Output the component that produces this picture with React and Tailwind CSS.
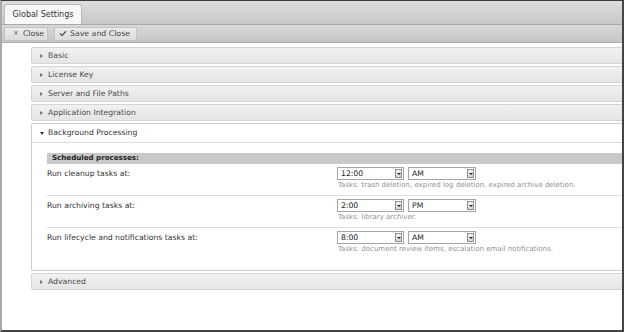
import React from 'react'

const font = { fontFamily: '"DejaVu Sans", Verdana, sans-serif' }

function Arrow({ open }) {
  if (open) {
    return <span className="w-0 h-0 border-l-[2.5px] border-r-[2.5px] border-t-[3px] border-l-transparent border-r-transparent border-t-[#333]" />
  }
  return <span className="w-0 h-0 border-t-[2.5px] border-b-[2.5px] border-l-[3px] border-t-transparent border-b-transparent border-l-[#777]" />
}

function Header({ title }) {
  return (
    <div className="h-[17px] w-[620px] flex items-center border border-[#d4d4d4] rounded-[2px] bg-linear-to-b from-[#f1f1f1] to-[#e5e5e5] pl-[8px]">
      <Arrow />
      <span className="ml-[5px] text-[7.7px] text-[#4a4a4a]">{title}</span>
    </div>
  )
}

function Select({ value, width }) {
  return (
    <div className={`h-[13px] ${width} flex items-center justify-between border border-[#a5a5a5] bg-white pl-[3px] pr-[1px]`}>
      <span className="text-[7.7px] text-[#222] leading-none">{value}</span>
      <span className="w-[7px] h-[9px] flex items-center justify-center border border-[#8c8c8c] bg-linear-to-b from-[#f4f4f4] to-[#d6d6d6]">
        <span className="w-0 h-0 border-l-[2px] border-r-[2px] border-t-[2.5px] border-l-transparent border-r-transparent border-t-[#222]" />
      </span>
    </div>
  )
}

const rows = [
  { label: 'Run cleanup tasks at:', time: '12:00', ampm: 'AM', tasks: 'Tasks: trash deletion, expired log deletion, expired archive deletion.' },
  { label: 'Run archiving tasks at:', time: '2:00', ampm: 'PM', tasks: 'Tasks: library archiver.' },
  { label: 'Run lifecycle and notifications tasks at:', time: '8:00', ampm: 'AM', tasks: 'Tasks: document review items, escalation email notifications.' },
]

export default function App() {
  return (
    <div style={font} className="w-[624px] h-[332px] overflow-hidden flex flex-col bg-white border-t border-t-[#3c3c3c] border-l-2 border-l-[#a9a9a9] border-r-2 border-r-[#444] border-b-2 border-b-[#444]">
      {/* tab strip */}
      <div className="h-[24px] shrink-0 flex items-end border-b border-[#a9a9a9] bg-linear-to-b from-[#dedede] to-[#c7c7c7] pl-[2px]">
        <div className="h-[20px] w-[78px] flex items-center justify-center bg-[#f8f8f8] border border-b-0 border-[#bcbcbc] rounded-t-[3px] text-[8px] text-[#333]">
          Global Settings
        </div>
      </div>

      {/* toolbar */}
      <div className="h-[18px] shrink-0 flex items-center gap-[6px] border-b border-[#ababab] bg-linear-to-b from-[#d9d9d9] to-[#c5c5c5] pl-[2px]">
        <button className="h-[14px] w-[44px] flex items-center pl-[8px] gap-[4px] bg-linear-to-b from-[#ececec] to-[#dcdcdc] border border-[#c3c3c3] text-[7.8px] text-[#444]">
          <span className="text-[7px] text-[#555]">×</span>
          Close
        </button>
        <button className="h-[14px] w-[83px] flex items-center pl-[4px] gap-[3px] bg-linear-to-b from-[#ececec] to-[#dcdcdc] border border-[#c3c3c3] text-[7.8px] text-[#444]">
          <svg width="8" height="7" viewBox="0 0 8 7"><path d="M1 3.6 L3 5.6 L7 1.2" fill="none" stroke="#555" strokeWidth="1.4" /></svg>
          Save and Close
        </button>
      </div>

      {/* accordion */}
      <div className="pt-[4px] pl-[29px] flex flex-col gap-[2px]">
        <Header title="Basic" />
        <Header title="License Key" />
        <Header title="Server and File Paths" />
        <Header title="Application Integration" />

        <div className="w-[620px] h-[148px] border border-[#cfcfcf] rounded-[2px] bg-white">
          <div className="h-[19px] flex items-center border-b border-[#dcdcdc] pl-[8px]">
            <Arrow open />
            <span className="ml-[4px] text-[7.7px] text-[#333]">Background Processing</span>
          </div>
          <div className="pl-[15px] pt-[10px]">
            <div className="h-[11px] flex items-center bg-[#c9c9c9] pl-[5px] text-[7.1px] font-bold text-[#222]">
              Scheduled processes:
            </div>
            {rows.map((r, i) => (
              <div key={r.label} className={`flex pt-[3px] ${i < 2 ? 'h-[32px] border-b border-[#dedede]' : 'h-[32px]'}`}>
                <div className="w-[290px] h-[13px] flex items-center text-[7.7px] text-[#333]">{r.label}</div>
                <div className="flex flex-col">
                  <div className="flex gap-[4px]">
                    <Select value={r.time} width="w-[67px]" />
                    <Select value={r.ampm} width="w-[68px]" />
                  </div>
                  <div className="mt-[1px] text-[7px] leading-[9px] text-[#939393] pl-[1px]">{r.tasks}</div>
                </div>
              </div>
            ))}
          </div>
        </div>

        <Header title="Advanced" />
      </div>
    </div>
  )
}
